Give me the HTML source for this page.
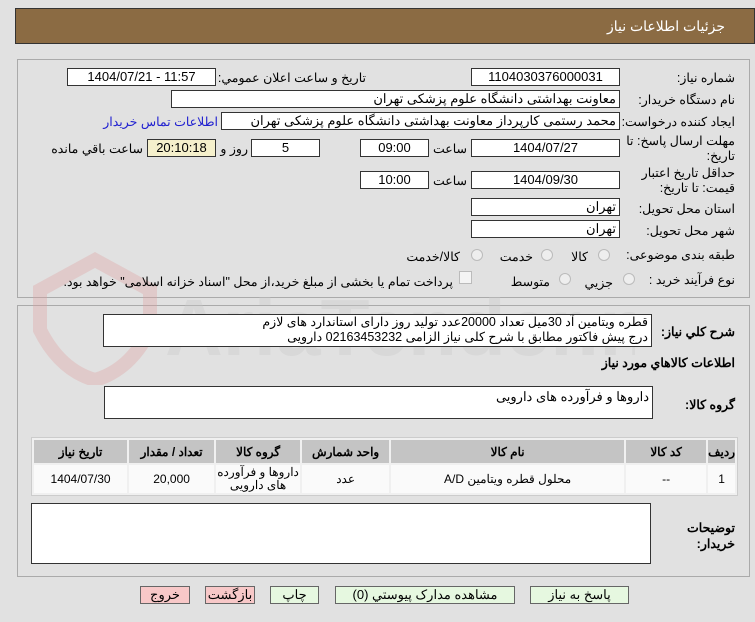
<!DOCTYPE html>
<html><head><meta charset="utf-8"><style>
*{box-sizing:border-box;margin:0;padding:0}
body{width:755px;height:622px;background:#e1e1e1;position:relative;overflow:hidden;font-family:"Liberation Sans","Noto Sans CJK SC",sans-serif;font-size:12px;color:#000}
.a{position:absolute}
.box{position:absolute;background:#fff;border:1px solid #333;height:18px;line-height:16px;font-size:13px}
.c{text-align:center}
.r{text-align:right;padding-right:3px;direction:rtl}
.l{position:absolute;direction:rtl;text-align:right;font-size:12.5px;white-space:nowrap}
.panel{position:absolute;border:1px solid #aaa;left:17px;width:733px}
.rad{position:absolute;width:12px;height:12px;border-radius:50%;border:1px solid #bbb;background:#eee}
table{border-collapse:separate;border-spacing:2px;position:absolute;left:31px;top:437px;width:707px;background:#f0f0f0;border:1px solid #ccc;direction:rtl}
th{background:#c4c4c4;height:23px;font-size:12px;font-weight:bold}
td{background:#fafafa;height:28px;text-align:center;font-size:12px}
.btn{position:absolute;top:586px;height:18px;border:1px solid #666;font-size:13px;text-align:center;line-height:16px;direction:rtl}
.g{background:#e6f8e0}.p{background:#f8c8c8}
</style></head><body>
<div class="a" style="left:15px;top:8px;width:740px;height:36px;background:#8b6b43;border:1px solid #333"></div>
<div class="l" style="right:30px;top:18px;color:#fff;font-size:14px">جزئيات اطلاعات نياز</div>

<div class="panel" style="top:59px;height:239px"></div>
<div class="panel" style="top:305px;height:272px"></div>

<svg class="a" style="left:15px;top:245px" width="620" height="140">
<path d="M25 45 L80 15 L135 45 L135 85 Q115 125 80 135 Q45 125 25 85 Z" fill="none" stroke="#e0a0a0" stroke-width="14" opacity=".35"/>
<text x="150" y="110" font-size="80" font-weight="bold" fill="#c8c8c8" font-family="Liberation Sans" opacity=".35">AriaTender.neT</text>
</svg>

<div class="l" style="right:20px;top:70px">شماره نياز:</div>
<div class="box c" style="left:471px;top:68px;width:149px">1104030376000031</div>
<div class="l" style="right:389px;top:70px">تاريخ و ساعت اعلان عمومي:</div>
<div class="box c" style="left:67px;top:68px;width:149px">1404/07/21 - 11:57</div>

<div class="l" style="right:20px;top:92px">نام دستگاه خريدار:</div>
<div class="box r" style="left:171px;top:90px;width:449px">معاونت بهداشتی دانشگاه علوم پزشکی تهران</div>

<div class="l" style="right:20px;top:114px">ايجاد کننده درخواست:</div>
<div class="box r" style="left:221px;top:112px;width:399px">محمد رستمی کارپرداز معاونت بهداشتی دانشگاه علوم پزشکی تهران</div>
<div class="l" style="right:537px;top:114px;color:#2020d0">اطلاعات تماس خريدار</div>

<div class="l" style="right:20px;top:134px;line-height:15px">مهلت ارسال پاسخ: تا<br>تاريخ:</div>
<div class="box c" style="left:471px;top:139px;width:149px">1404/07/27</div>
<div class="l" style="right:288px;top:141px">ساعت</div>
<div class="box c" style="left:360px;top:139px;width:69px">09:00</div>
<div class="box c" style="left:251px;top:139px;width:69px">5</div>
<div class="l" style="right:507px;top:141px">روز و</div>
<div class="box c" style="left:147px;top:139px;width:69px;background:#f5f0cc">20:10:18</div>
<div class="l" style="right:612px;top:141px">ساعت باقي مانده</div>

<div class="l" style="right:20px;top:166px;line-height:15px">حداقل تاريخ اعتبار<br>قيمت: تا تاريخ:</div>
<div class="box c" style="left:471px;top:171px;width:149px">1404/09/30</div>
<div class="l" style="right:288px;top:173px">ساعت</div>
<div class="box c" style="left:360px;top:171px;width:69px">10:00</div>

<div class="l" style="right:20px;top:201px">استان محل تحويل:</div>
<div class="box r" style="left:471px;top:198px;width:149px">تهران</div>
<div class="l" style="right:20px;top:223px">شهر محل تحويل:</div>
<div class="box r" style="left:471px;top:220px;width:149px">تهران</div>

<div class="l" style="right:20px;top:247px">طبقه بندی موضوعی:</div>
<div class="rad" style="left:598px;top:249px"></div><div class="l" style="right:167px;top:249px">کالا</div>
<div class="rad" style="left:541px;top:249px"></div><div class="l" style="right:222px;top:249px">خدمت</div>
<div class="rad" style="left:471px;top:249px"></div><div class="l" style="right:295px;top:249px">کالا/خدمت</div>

<div class="l" style="right:20px;top:272px">نوع فرآيند خريد :</div>
<div class="rad" style="left:623px;top:273px"></div><div class="l" style="right:142px;top:275px">جزيي</div>
<div class="rad" style="left:559px;top:273px"></div><div class="l" style="right:205px;top:274px">متوسط</div>
<div class="a" style="left:459px;top:271px;width:13px;height:13px;border:1px solid #bbb;background:#f4f4f4"></div>
<div class="l" style="right:302px;top:274px">پرداخت تمام يا بخشی از مبلغ خريد،از محل "اسناد خزانه اسلامی" خواهد بود.</div>

<div class="l" style="right:20px;top:324px;font-weight:bold">شرح کلي نياز:</div>
<div class="box r" style="left:103px;top:314px;width:549px;height:33px;line-height:15px;font-size:12.5px;white-space:nowrap;overflow:hidden">قطره ویتامین آد 30میل تعداد 20000عدد تولید روز دارای استاندارد های لازم<br>درج پیش فاکتور مطابق با شرح کلی نیاز الزامی 02163453232 دارویی</div>
<div class="l" style="right:20px;top:355px;font-weight:bold">اطلاعات کالاهاي مورد نياز</div>

<div class="l" style="right:20px;top:397px;font-weight:bold">گروه کالا:</div>
<div class="box r" style="left:104px;top:386px;width:549px;height:33px;padding-top:2px">داروها و فرآورده های دارویی</div>

<table>
<tr><th style="width:26px">رديف</th><th style="width:80px">کد کالا</th><th style="width:233px">نام کالا</th><th style="width:87px">واحد شمارش</th><th style="width:84px">گروه کالا</th><th style="width:85px">تعداد / مقدار</th><th>تاريخ نياز</th></tr>
<tr><td>1</td><td>--</td><td>محلول قطره ویتامین A/D</td><td>عدد</td><td style="line-height:13px">داروها و فرآورده<br>های دارویی</td><td>20,000</td><td>1404/07/30</td></tr>
</table>

<div class="l" style="right:20px;top:520px;font-weight:bold;line-height:16px">توضيحات<br>خريدار:</div>
<div class="box" style="left:31px;top:503px;width:620px;height:61px"></div>

<div class="btn p" style="left:140px;width:50px">خروج</div>
<div class="btn p" style="left:205px;width:50px">بازگشت</div>
<div class="btn g" style="left:270px;width:49px">چاپ</div>
<div class="btn g" style="left:335px;width:180px">مشاهده مدارک پيوستي (0)</div>
<div class="btn g" style="left:530px;width:99px">پاسخ به نياز</div>
</body></html>
